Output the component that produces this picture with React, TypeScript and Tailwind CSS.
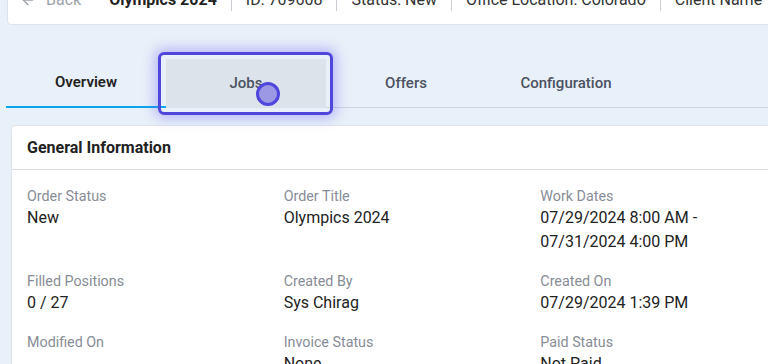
import { ArrowLeft } from "lucide-react";

const fields: { label: string; value: string[] }[] = [
  { label: "Order Status", value: ["New"] },
  { label: "Order Title", value: ["Olympics 2024"] },
  { label: "Work Dates", value: ["07/29/2024 8:00 AM -", "07/31/2024 4:00 PM"] },
  { label: "Filled Positions", value: ["0 / 27"] },
  { label: "Created By", value: ["Sys Chirag"] },
  { label: "Created On", value: ["07/29/2024 1:39 PM"] },
  { label: "Modified On", value: [""] },
  { label: "Invoice Status", value: ["None"] },
  { label: "Paid Status", value: ["Not Paid"] },
];

const tabs = ["Overview", "Jobs", "Offers", "Configuration"];

export default function App() {
  return (
    <div className="h-[364px] w-[768px] overflow-hidden bg-[#e8f0f9] font-['Roboto',sans-serif]">
      {/* order header, scrolled partly out of view */}
      <div className="-mt-[26px] ml-[7px] flex h-[51px] w-[800px] items-center rounded-b border border-[#dfe3e9] bg-white pl-[12px] text-[16px] whitespace-nowrap">
        <span className="flex items-center gap-[10px] text-[#9ea3ab]">
          <ArrowLeft size={16} strokeWidth={2} /> Back
        </span>
        <span className="ml-[28px] font-bold text-[#222]">Olympics 2024</span>
        <span className="mx-[14px] h-[22px] w-px bg-[#c9cdd3]" />
        <span className="text-[#333]">ID: 709608</span>
        <span className="mx-[14px] h-[22px] w-px bg-[#c9cdd3]" />
        <span className="text-[#333]">Status: New</span>
        <span className="mx-[14px] h-[22px] w-px bg-[#c9cdd3]" />
        <span className="text-[#333]">Office Location: Colorado</span>
        <span className="mx-[14px] h-[22px] w-px bg-[#c9cdd3]" />
        <span className="text-[#333]">Client Name</span>
      </div>

      {/* tabs */}
      <div className="ml-[6px] mt-[34px] flex border-b border-[#cdd5df]">
        {tabs.map((t, i) => (
          <div
            key={t}
            className={`relative -mb-px flex h-[49px] w-[160px] items-center justify-center text-[15px] ${
              i === 0
                ? "border-b-2 border-[#0ba5ec] font-semibold text-[#222]"
                : i === 1
                ? "bg-[#dce3ea] font-medium text-[#4b5261]"
                : "font-medium text-[#4b5261]"
            }`}
          >
            {t}
            {i === 1 && (
              <>
                <span className="absolute -left-[8px] -right-[7px] -top-[7px] -bottom-[7px] rounded-[6px] border-[3px] border-[#4f46dc] shadow-[0_0_12px_4px_rgba(99,91,240,0.35)]" />
                <span className="absolute left-[90px] top-[23px] h-[24px] w-[24px] rounded-full border-[3px] border-[#4f46dc] bg-[#9b98e6]" />
              </>
            )}
          </div>
        ))}
      </div>

      {/* general information card */}
      <div className="ml-[11px] mt-[17px] w-[802px] rounded border border-[#dfe3e8] bg-white">
        <div className="flex h-[44px] items-center border-b border-[#dcdfe4] px-[15px] pt-px text-[16px] font-bold text-[#222]">
          General Information
        </div>
        <div className="grid grid-cols-3 gap-y-[17px] px-[15px] pt-[16px]">
          {fields.map((f) => (
            <div key={f.label}>
              <div className="text-[14.3px] leading-5 text-[#878d96]">{f.label}</div>
              {f.value.map((v, j) => (
                <div key={j} className="min-h-6 text-[16px] leading-6 text-[#222]">
                  {v}
                </div>
              ))}
            </div>
          ))}
        </div>
      </div>
    </div>
  );
}
